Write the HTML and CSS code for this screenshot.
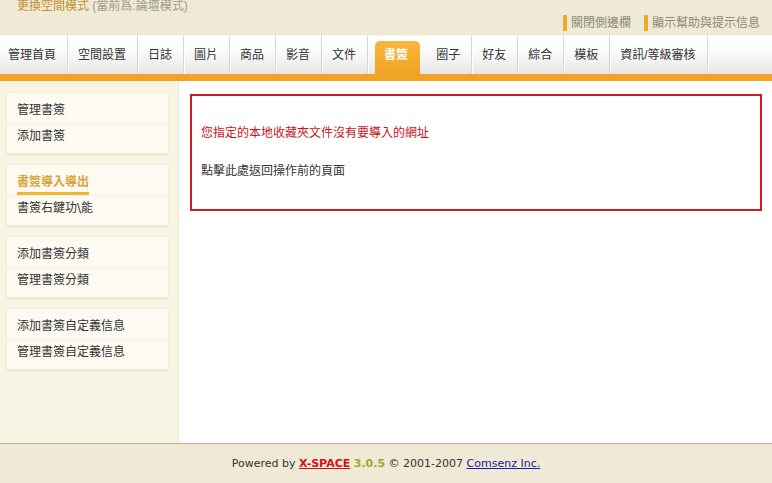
FILE: index.html
```html
<!DOCTYPE html>
<html>
    <head>
        <meta charset="UTF-8">
        <title>書簽導入導出</title>
        <link rel="stylesheet" href="styles.css">
    </head>
    <body>
        <div id="header">
            <div class="mode"><a href="#">更換空間模式</a> <span>(當前爲:論壇模式)</span></div>
            <div class="links">
                <a href="#">關閉側邊欄</a>
                <a href="#">顯示幫助與提示信息</a>
            </div>
        </div>
        <div id="nav">
            <ul>
                <li class="first"><a href="#">管理首頁</a></li>
                <li><a href="#">空間設置</a></li>
                <li><a href="#">日誌</a></li>
                <li><a href="#">圖片</a></li>
                <li><a href="#">商品</a></li>
                <li><a href="#">影音</a></li>
                <li class="pre"><a href="#">文件</a></li>
                <li class="on"><a href="#">書簽</a></li>
                <li><a href="#">圈子</a></li>
                <li><a href="#">好友</a></li>
                <li><a href="#">綜合</a></li>
                <li><a href="#">模板</a></li>
                <li><a href="#">資訊/等級審核</a></li>
            </ul>
        </div>
        <div id="main">
            <div class="side">
                <ul class="box">
                    <li><a href="#">管理書簽</a></li>
                    <li><a href="#">添加書簽</a></li>
                </ul>
                <ul class="box">
                    <li class="cur"><a href="#">書簽導入導出</a></li>
                    <li><a href="#">書簽右鍵功<span class="bs">\</span>能</a></li>
                </ul>
                <ul class="box">
                    <li><a href="#">添加書簽分類</a></li>
                    <li><a href="#">管理書簽分類</a></li>
                </ul>
                <ul class="box">
                    <li><a href="#">添加書簽自定義信息</a></li>
                    <li><a href="#">管理書簽自定義信息</a></li>
                </ul>
            </div>
            <div class="content">
                <div class="msg">
                    <p class="err">您指定的本地收藏夾文件沒有要導入的網址</p>
                    <p><a href="#">點擊此處返回操作前的頁面</a></p>
                </div>
            </div>
        </div>
        <div id="footer">
            Powered by <a class="xs" href="#">X-SPACE</a> <b class="ver">3.0.5</b> &copy; 2001-2007 <a class="cs" href="#">Comsenz Inc.</a>
        </div>
    </body>
</html>
```

FILE: styles.css
```css
*{ margin:0; padding:0; }
body{
    font-family: "Liberation Sans", "Noto Sans CJK TC", sans-serif;
    font-size: 12px;
    color: #333;
    background: #fff;
}
a{ color: #333; text-decoration: none; }
ul{ list-style: none; }

#header{
    height: 35px;
    background: #efead6;
    border-bottom: 1px solid #f7f4ea;
}
#header .mode{
    padding-left: 17px;
    line-height: 12px;
    color: #a09a8a;
}
#header .mode a{ color: #c4902e; }
#header .links{
    display: flex;
    justify-content: flex-end;
    gap: 13px;
    padding: 3px 12px 0 0;
    line-height: 16px;
}
#header .links a{
    color: #8c8676;
    border-left: 4px solid #f0a92a;
    padding-left: 4px;
}

#nav{
    height: 38px;
    background: linear-gradient(#ffffff, #fbfbfb 40%, #e6e6e6);
    border-bottom: 7px solid #f0a425;
}
#nav ul{
    display: flex;
    height: 100%;
}
#nav li{
    display: flex;
    align-items: center;
    padding: 0 11px 0 10px;
    border-right: 1px solid #d6d6d6;
    box-shadow: 1px 0 0 #fff;
}
#nav li.first{ padding-left: 8px; }
#nav li a{ color: #333; line-height: 16px; }
#nav li.pre{ padding-right: 11px; }
#nav li.on{
    margin: 5px 6px 0 7px;
    padding: 0 12px 0 9px;
    border-right: none;
    box-shadow: none;
    border-radius: 5px 5px 0 0;
    background: linear-gradient(#f7b73d, #f0a425);
}
#nav li.on a{
    color: #fff;
    font-weight: bold;
    padding-bottom: 5px;
}

#main{
    display: flex;
    height: 362px;
}
#main .side{
    width: 163px;
    padding: 11px 9px 0 6px;
    background: #f8f4e4;
    border-right: 1px solid #ebe5cf;
}
#main .box{
    background: #fcfaf1;
    border: 1px solid #f3eedb;
    box-shadow: 0 1px 1px #ece6d0;
    padding: 5px 0 4px;
    margin-bottom: 10px;
}
#main .box li{
    height: 25px;
    line-height: 25px;
    padding-left: 10px;
    border-top: 1px solid #f6f2e4;
}
#main .box li:first-child{ border-top: none; }
#main .box li .bs{ font-family: "DejaVu Sans", sans-serif; }
#main .box li.cur a{
    display: inline-block;
    color: #d8a33c;
    font-weight: bold;
    line-height: 19px;
    padding-top: 3px;
    border-bottom: 3px solid #efb834;
}
#main .content{
    flex: 1;
    padding: 13px 10px 0 11px;
}
#main .msg{
    border: 2px solid #d11a1a;
    padding: 28px 9px 29px;
}
#main .msg p{ line-height: 18px; }
#main .msg p.err{
    color: #c8141a;
    margin-bottom: 20px;
}

#footer{
    height: 39px;
    line-height: 40px;
    border-top: 1px solid #bcb29c;
    background: #efe9d5;
    text-align: center;
    font-family: "DejaVu Sans", Verdana, sans-serif;
    font-size: 11px;
    color: #333;
}
#footer a.xs{
    color: #d2131b;
    font-weight: bold;
    text-decoration: underline;
}
#footer .ver{ color: #99a833; }
#footer a.cs{
    color: #1c20a0;
    text-decoration: underline;
}
```
